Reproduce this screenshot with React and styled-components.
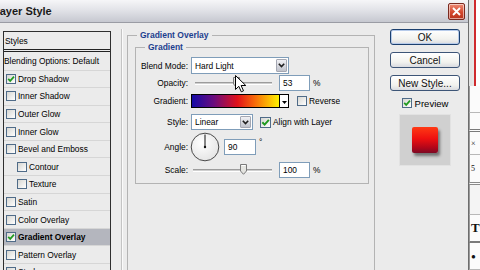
import React from 'react';
import styled, { createGlobalStyle } from 'styled-components';

const GlobalStyle = createGlobalStyle`
  html, body {
    margin: 0;
    padding: 0;
  }
  body {
    width: 480px;
    height: 270px;
    overflow: hidden;
    background: #ebebeb;
    font-family: "Liberation Sans", Arial, sans-serif;
    color: #000;
  }
`;

const Screen = styled.div`
  display: flex;
  width: 480px;
  height: 270px;
  overflow: hidden;
`;

const Dialog = styled.div`
  width: 468px;
  flex: none;
  border-right: 1px solid #6d6d6d;
  display: flex;
  flex-direction: column;
  background: #ebebeb;
`;

const TitleBar = styled.div`
  height: 22px;
  flex: none;
  display: flex;
  align-items: center;
  justify-content: space-between;
  padding-right: 3px;
  background: linear-gradient(#f6f6f8, #e2e3e8 45%, #c6c8d0);
  border-bottom: 1px solid #9a9ca4;
  overflow: hidden;
`;

const Title = styled.span`
  margin-left: -7px;
  font-size: 11px;
  font-weight: bold;
  color: #1a1a1a;
`;

const CloseButton = styled.div`
  width: 15px;
  height: 15px;
  border: 1px solid #7a2a20;
  border-radius: 2px;
  background: linear-gradient(#ee8c76, #d4482e 55%, #b8321c);
  box-shadow: inset 0 0 0 1px rgba(255, 255, 255, 0.55);
  display: flex;
  align-items: center;
  justify-content: center;
`;

const Content = styled.div`
  flex: 1;
  display: flex;
  min-height: 0;
`;

// left "Styles" list
const StylesList = styled.div`
  margin: 8px 0 0 3px;
  width: 108px;
  flex: none;
  box-sizing: border-box;
  border: 1px solid #2e2e2e;
  border-bottom: none;
  font-size: 8.4px;
`;

const ListHeader = styled.div`
  height: 17px;
  display: flex;
  align-items: center;
  padding-left: 1px;
  border-bottom: 3px double #222;
`;

const ListRow = styled.div`
  height: ${p => p.h || 17.6}px;
  box-sizing: border-box;
  display: flex;
  align-items: center;
  gap: 2px;
  padding-left: ${p => p.indent}px;
  border-top: 1px solid ${p => (p.first ? 'transparent' : '#d6d6d6')};
  background: ${p => (p.selected ? '#b4b6be' : 'transparent')};
  font-weight: ${p => (p.selected ? 'bold' : 'normal')};
  white-space: nowrap;
`;

const Box = styled.span`
  flex: none;
  width: ${p => p.size}px;
  height: ${p => p.size}px;
  box-sizing: border-box;
  border: 1px solid #4f6b88;
  background: linear-gradient(135deg, #d6d6d2, #ffffff);
  display: flex;
  align-items: center;
  justify-content: center;
`;

const Checkbox = ({ checked, size = 10 }) => (
  <Box size={size}>
    {checked && (
      <svg width={size - 2} height={size - 2} viewBox="0 0 8 8">
        <path d="M1.2 3.8 L3.2 5.9 L7 1.6" fill="none" stroke="#1f9a1f" strokeWidth="1.7" />
      </svg>
    )}
  </Box>
);

// middle options
const Middle = styled.div`
  margin: 6px 0 0 10px;
  border-left: 1px solid #c4c4c4;
  box-shadow: inset 1px 0 0 #fafafa;
  padding-left: 5px;
  flex: none;
`;

const Group = styled.fieldset`
  margin: 0;
  width: ${p => p.w}px;
  height: ${p => (p.h ? `${p.h}px` : 'auto')};
  box-sizing: border-box;
  padding: ${p => p.pad};
  border: 1px solid #b3b3b3;
  min-width: 0;
`;

const Legend = styled.legend`
  margin-left: ${p => p.offset}px;
  padding: 0 3px;
  font-size: 8.5px;
  font-weight: bold;
  line-height: 12px;
  color: #1d3f8f;
`;

const Row = styled.div`
  display: flex;
  align-items: center;
  height: ${p => p.h}px;
  margin-top: ${p => p.mt}px;
  font-size: 8.4px;
  white-space: nowrap;
`;

const Label = styled.span`
  width: 47px;
  flex: none;
  margin-right: 3px;
  text-align: right;
`;

const Select = styled.div`
  width: ${p => p.w}px;
  height: 100%;
  box-sizing: border-box;
  border: 1px solid #7f9db9;
  background: #fff;
  display: flex;
  align-items: center;
  justify-content: space-between;
  padding: 1px 1px 1px 3px;
`;

const DropButton = styled.span`
  width: 11px;
  height: 100%;
  box-sizing: border-box;
  border: 1px solid #a4a7b2;
  border-radius: 1px;
  background: linear-gradient(#f0f0f4, #c0c3cc);
  display: flex;
  align-items: center;
  justify-content: center;
`;

const Chevron = () => (
  <svg width="7" height="5" viewBox="0 0 7 5">
    <polyline points="0.8,0.8 3.5,3.6 6.2,0.8" fill="none" stroke="#1e1e1e" strokeWidth="1.6" />
  </svg>
);

const Track = styled.div`
  position: relative;
  flex: none;
  margin-left: ${p => p.ml}px;
  width: ${p => p.w}px;
  height: 1px;
  border-top: 1px solid #9c9c9c;
  border-bottom: 1px solid #ffffff;
  background: #cfcfcf;
`;

const Thumb = styled.svg`
  position: absolute;
  left: ${p => p.x}px;
  top: -6px;
`;

const Cursor = styled.svg`
  position: absolute;
  left: 40px;
  top: -8px;
`;

const Input = styled.div`
  flex: none;
  margin-left: ${p => p.ml}px;
  width: ${p => p.w}px;
  height: ${p => p.h}px;
  box-sizing: border-box;
  border: 1px solid #7f9db9;
  background: #fff;
  display: flex;
  align-items: center;
  padding-left: 3px;
`;

const Unit = styled.span`
  margin-left: 3px;
  align-self: ${p => (p.top ? 'flex-start' : 'center')};
  margin-top: ${p => (p.top ? 5 : 0)}px;
`;

const GradientBar = styled.div`
  width: 89px;
  height: 100%;
  box-sizing: border-box;
  border: 1px solid #000;
  background: linear-gradient(90deg, #140aa6 0%, #6a0c7e 25%, #e0101a 52%, #f86a0a 72%, #fff200 100%);
`;

const GradientArrow = styled.span`
  width: 9px;
  height: 100%;
  box-sizing: border-box;
  border: 1px solid #000;
  border-left: none;
  background: #fff;
  display: flex;
  align-items: flex-end;
  justify-content: center;
  padding-bottom: 3px;
`;

const CheckLabel = styled.span`
  display: flex;
  align-items: center;
  gap: 2px;
  margin-left: ${p => p.ml}px;
`;

const Dial = styled.svg`
  margin-left: -1px;
  flex: none;
`;

// right buttons column
const RightCol = styled.div`
  margin: 6px 0 0 15px;
  width: 70px;
  flex: none;
  display: flex;
  flex-direction: column;
  align-items: center;
`;

const Button = styled.div`
  align-self: stretch;
  height: 16px;
  margin-top: ${p => p.mt}px;
  box-sizing: border-box;
  border: 1px solid ${p => (p.primary ? '#1b3f6e' : '#3d5577')};
  border-radius: 3px;
  background: linear-gradient(#ffffff, #f2f2ee 65%, #d9dbe0);
  box-shadow: ${p => (p.primary ? 'inset 0 0 0 1px #b7cbea' : 'none')};
  display: flex;
  align-items: center;
  justify-content: center;
  font-size: 10px;
  color: #111;
`;

const PreviewToggle = styled.div`
  margin-top: 7px;
  height: 10px;
  display: flex;
  align-items: center;
  gap: 3px;
  font-size: 9.5px;
`;

const PreviewWell = styled.div`
  margin-top: 6px;
  width: 52px;
  height: 52px;
  box-sizing: border-box;
  background: #d0d0d0;
  border: 1px solid #e2e2e2;
  display: flex;
  align-items: center;
  justify-content: center;
`;

const PreviewSwatch = styled.div`
  width: 26px;
  height: 26px;
  border-radius: 2px;
  background: linear-gradient(#ff3a14, #ee1010 45%, #b0061a 80%, #7c0a24);
  box-shadow: 2px 3px 3px rgba(0, 0, 0, 0.45);
`;

// bit of the app window behind the dialog
const BackStrip = styled.div`
  flex: 1;
  display: flex;
  flex-direction: column;
  background: #f0f0f0;
  font-family: "Liberation Serif", serif;
  overflow: hidden;
`;

const StripCell = styled.div`
  height: ${p => p.h}px;
  flex: none;
  box-sizing: border-box;
  background: ${p => p.bg || '#fbfbfb'};
  border-left: ${p => (p.accent ? `3px solid #e3e3e3` : '1px solid #9a9a9a')};
  border-bottom: ${p => p.line || '1px solid #b8b8b8'};
  display: flex;
  align-items: center;
  padding-left: 1px;
  font-size: ${p => p.fs || 8}px;
  font-weight: ${p => (p.bold ? 'bold' : 'normal')};
  color: #111;
`;

const RedEdge = styled.div`
  align-self: stretch;
  flex: 1;
  margin-left: 1px;
  border-left: 2px solid #cf2a2e;
  background: #fff;
`;

const styleRows = [
  { label: 'Drop Shadow', checked: true },
  { label: 'Inner Shadow' },
  { label: 'Outer Glow' },
  { label: 'Inner Glow' },
  { label: 'Bevel and Emboss' },
  { label: 'Contour', sub: true },
  { label: 'Texture', sub: true },
  { label: 'Satin' },
  { label: 'Color Overlay' },
  { label: 'Gradient Overlay', checked: true, selected: true },
  { label: 'Pattern Overlay' },
  { label: 'Stroke' },
];

const SliderThumb = ({ x }) => (
  <Thumb x={x} width="7" height="11" viewBox="0 0 7 11">
    <path d="M0.5 0.5 H6.5 V7 L3.5 10.3 L0.5 7 Z" fill="#e4e4e0" stroke="#7a7a7a" />
    <path d="M1.5 1.5 H5.5" stroke="#fff" />
  </Thumb>
);

export default function App() {
  return (
    <>
      <GlobalStyle />
      <Screen>
        <Dialog>
          <TitleBar>
            <Title>Layer Style</Title>
            <CloseButton>
              <svg width="9" height="9" viewBox="0 0 9 9">
                <path d="M1 1 L8 8 M8 1 L1 8" stroke="#fff" strokeWidth="1.8" />
              </svg>
            </CloseButton>
          </TitleBar>

          <Content>
            <StylesList>
              <ListHeader>Styles</ListHeader>
              <ListRow h={17.5} indent={0} first>
                Blending Options: Default
              </ListRow>
              {styleRows.map(r => (
                <ListRow key={r.label} indent={r.sub ? 13 : 2} selected={r.selected}>
                  <Checkbox checked={r.checked} size={10} />
                  {r.label}
                </ListRow>
              ))}
            </StylesList>

            <Middle>
              <Group w={248} h={250} pad="0 5px 0 7px">
                <Legend offset={2}>Gradient Overlay</Legend>
                <Group w={234} pad="4px 5px 5px 5px">
                  <Legend offset={4}>Gradient</Legend>

                  <Row h={17} mt={0}>
                    <Label>Blend Mode:</Label>
                    <Select w={98}>
                      Hard Light
                      <DropButton><Chevron /></DropButton>
                    </Select>
                  </Row>

                  <Row h={16} mt={1}>
                    <Label>Opacity:</Label>
                    <Track ml={4} w={77}>
                      <SliderThumb x={38} />
                      <Cursor width="12" height="18" viewBox="0 0 12 18">
                        <path
                          d="M0.5 0.5 L0.5 14.5 L3.8 11.3 L6.3 16.8 L8.5 15.8 L6.1 10.5 L10.8 10.5 Z"
                          fill="#fff"
                          stroke="#000"
                          strokeWidth="1"
                          strokeLinejoin="round"
                        />
                      </Cursor>
                    </Track>
                    <Input ml={7} w={31} h={16}>53</Input>
                    <Unit>%</Unit>
                  </Row>

                  <Row h={14} mt={3}>
                    <Label>Gradient:</Label>
                    <GradientBar />
                    <GradientArrow>
                      <svg width="5" height="3" viewBox="0 0 5 3">
                        <path d="M0 0 H5 L2.5 3 Z" fill="#000" />
                      </svg>
                    </GradientArrow>
                    <CheckLabel ml={8}>
                      <Checkbox size={10} />
                      Reverse
                    </CheckLabel>
                  </Row>

                  <Row h={16} mt={6}>
                    <Label>Style:</Label>
                    <Select w={62}>
                      Linear
                      <DropButton><Chevron /></DropButton>
                    </Select>
                    <CheckLabel ml={7}>
                      <Checkbox checked size={11} />
                      Align with Layer
                    </CheckLabel>
                  </Row>

                  <Row h={29} mt={2}>
                    <Label>Angle:</Label>
                    <Dial width="30" height="30" viewBox="0 0 30 30">
                      <defs>
                        <radialGradient id="dialFill" cx="0.4" cy="0.35" r="0.75">
                          <stop offset="0" stopColor="#ffffff" />
                          <stop offset="1" stopColor="#e2e2e2" />
                        </radialGradient>
                      </defs>
                      <circle cx="15" cy="15" r="13.8" fill="url(#dialFill)" stroke="#4a4a4a" strokeWidth="1" />
                      <line x1="15" y1="15" x2="15" y2="2.5" stroke="#111" strokeWidth="1" />
                      <circle cx="15" cy="15" r="1.2" fill="#111" />
                    </Dial>
                    <Input ml={4} w={32} h={16}>90</Input>
                    <Unit top>°</Unit>
                  </Row>

                  <Row h={16} mt={1}>
                    <Label>Scale:</Label>
                    <Track ml={2} w={79}>
                      <SliderThumb x={47} />
                    </Track>
                    <Input ml={7} w={31} h={16}>100</Input>
                    <Unit>%</Unit>
                  </Row>
                </Group>
              </Group>
            </Middle>

            <RightCol>
              <Button primary mt={0}>OK</Button>
              <Button mt={7}>Cancel</Button>
              <Button mt={7}>New Style...</Button>
              <PreviewToggle>
                <Checkbox checked size={10} />
                Preview
              </PreviewToggle>
              <PreviewWell>
                <PreviewSwatch />
              </PreviewWell>
            </RightCol>
          </Content>
        </Dialog>

        <BackStrip>
          <StripCell h={86} accent bg="#e6e6e6" line="none">
            <RedEdge />
          </StripCell>
          <StripCell h={27} />
          <StripCell h={19} line="3px double #7a7a7a" />
          <StripCell h={23} fs={8}>×</StripCell>
          <StripCell h={30} fs={8} line="3px double #8a8a8a">5</StripCell>
          <StripCell h={30} bg="#f4f4f4" />
          <StripCell h={28} fs={13} bold line="2px solid #7a7a7a">T</StripCell>
          <StripCell h={27} fs={8}>●</StripCell>
        </BackStrip>
      </Screen>
    </>
  );
}
